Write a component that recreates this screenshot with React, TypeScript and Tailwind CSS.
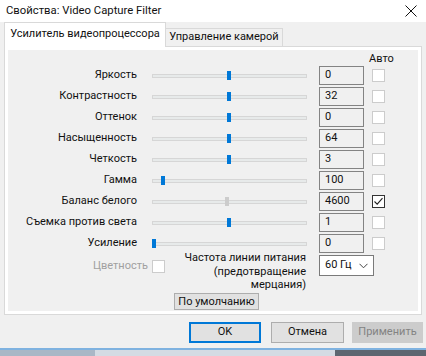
import React from 'react';

// --- строки свойств видеоусилителя ---
interface Row {
    label: string;
    value: string;
    thumb: number;
    disabled?: boolean;
    auto?: boolean;
}

const rows: Row[] = [
    { label: 'Яркость', value: '0', thumb: 75 },
    { label: 'Контрастность', value: '32', thumb: 75 },
    { label: 'Оттенок', value: '0', thumb: 75 },
    { label: 'Насыщенность', value: '64', thumb: 75 },
    { label: 'Четкость', value: '3', thumb: 75 },
    { label: 'Гамма', value: '100', thumb: 9 },
    { label: 'Баланс белого', value: '4600', thumb: 73, disabled: true, auto: true },
    { label: 'Съемка против света', value: '1', thumb: 75 },
    { label: 'Усиление', value: '0', thumb: 0 },
];

function CheckBox({ checked }: { checked?: boolean }) {
    if (checked) {
        return (
            <div className="w-[13px] h-[13px] border border-[#333333] bg-white flex items-center justify-center">
                <svg width="11" height="11" viewBox="0 0 11 11">
                    <path d="M1.5 5.5 L4.2 8.2 L9.5 2.2" fill="none" stroke="#222" strokeWidth="1.1" />
                </svg>
            </div>
        );
    }
    return <div className="w-[13px] h-[13px] border border-[#cccccc] bg-white" />;
}

function Slider({ thumb, disabled }: { thumb: number; disabled?: boolean }) {
    return (
        <div className="relative w-[155px] h-[19px] flex items-center">
            <div className="w-full h-[4px] bg-[#e7eaea] border border-[#d6d6d6]" />
            <div
                className={disabled ? 'absolute top-[5px] w-[4px] h-[9px] bg-[#cccccc]' : 'absolute top-[5px] w-[4px] h-[9px] bg-[#0078d7]'}
                style={{ left: thumb }}
            />
        </div>
    );
}

export default function App() {
    return (
        <div
            className="w-[426px] h-[356px] bg-[#f0f0f0] overflow-hidden text-[11px] text-[#111] whitespace-nowrap"
            style={{ fontFamily: 'Roboto, "Noto Sans", sans-serif' }}
        >
            {/* заголовок */}
            <div className="h-[22px] bg-white flex items-center justify-between pl-[6px] pr-[9px]">
                <span className="leading-none text-[11.3px]">Свойства: Video Capture Filter</span>
                <svg width="12" height="12" viewBox="0 0 12 12">
                    <path d="M0.5 0.5 L11.5 11.5 M11.5 0.5 L0.5 11.5" stroke="#111" strokeWidth="1" />
                </svg>
            </div>

            {/* вкладки */}
            <div className="flex items-end pl-[4px] h-[24px]">
                <div className="relative z-10 -mb-px h-[25px] w-[162px] bg-white border border-b-0 border-[#d9d9d9] flex items-center justify-center pb-[2px]">
                    Усилитель видеопроцессора
                </div>
                <div className="h-[18px] w-[117px] border border-l-0 border-b-0 border-[#d9d9d9] bg-[#f0f0f0] flex items-center justify-center">
                    Управление камерой
                </div>
            </div>

            {/* панель */}
            <div className="mx-[4px] h-[269px] border border-[#d9d9d9] bg-white p-[3px]">
                <div className="h-full bg-[#f0f0f0]">
                    <div className="h-[16px] pl-[361px] flex items-center leading-none">Авто</div>
                    {rows.map((r) => (
                        <div key={r.label} className="h-[21px] flex items-start">
                            <div className="w-[129px] h-[19px] flex items-center justify-end">{r.label}</div>
                            <div className="ml-[15px]">
                                <Slider thumb={r.thumb} disabled={r.disabled} />
                            </div>
                            <div className="ml-[12px] w-[45px] h-[19px] border border-[#838383] flex items-center pl-[5px]">
                                {r.value}
                            </div>
                            <div className="ml-[8px] h-[19px] flex items-center">
                                <CheckBox checked={r.auto} />
                            </div>
                        </div>
                    ))}

                    {/* нижняя часть панели */}
                    <div className="-mt-[4px] flex items-start">
                        <div className="w-[157px] flex items-center justify-end pt-[7px]">
                            <span className="text-[#a0a0a0] mr-[4px]">Цветность</span>
                            <CheckBox />
                        </div>
                        <div className="w-[141px] text-right leading-[13.5px]">
                            <div>Частота линии питания</div>
                            <div>(предотвращение</div>
                            <div>мерцания)</div>
                        </div>
                        <div className="ml-[13px] mt-[4px] w-[55px] h-[21px] border border-[#7a7a7a] bg-white flex items-center justify-between pl-[5px] pr-[5px]">
                            <span>60 Гц</span>
                            <svg width="9" height="6" viewBox="0 0 9 6">
                                <path d="M0.5 0.8 L4.5 4.8 L8.5 0.8" fill="none" stroke="#444" strokeWidth="1" />
                            </svg>
                        </div>
                    </div>
                    <div className="ml-[166px] mt-[1px] w-[85px] h-[17px] border border-[#adadad] bg-[#e1e1e1] flex items-center justify-center leading-none">
                        По умолчанию
                    </div>
                </div>
            </div>

            {/* кнопки */}
            <div className="flex mt-[7px] h-[21px]">
                <div className="ml-[189px] w-[72px] h-[21px] border-2 border-[#0078d7] bg-[#e1e1e1] flex items-center justify-center">
                    OK
                </div>
                <div className="ml-[10px] w-[73px] h-[21px] border border-[#adadad] bg-[#e1e1e1] flex items-center justify-center">
                    Отмена
                </div>
                <div className="ml-[8px] w-[71px] h-[21px] border border-[#cccccc] bg-[#cccccc] text-[#838383] flex items-center justify-center">
                    Применить
                </div>
            </div>

            {/* край окна за диалогом */}
            <div className="mt-[5px] h-[2px] bg-[#7fb2e0]" />
            <div className="flex h-[6px]">
                <div className="w-[95px] bg-[#a9b7c6]" />
                <div className="w-[240px] bg-[#d4dbe3]" />
                <div className="flex-1 bg-[#5d6670]" />
            </div>
        </div>
    );
}
